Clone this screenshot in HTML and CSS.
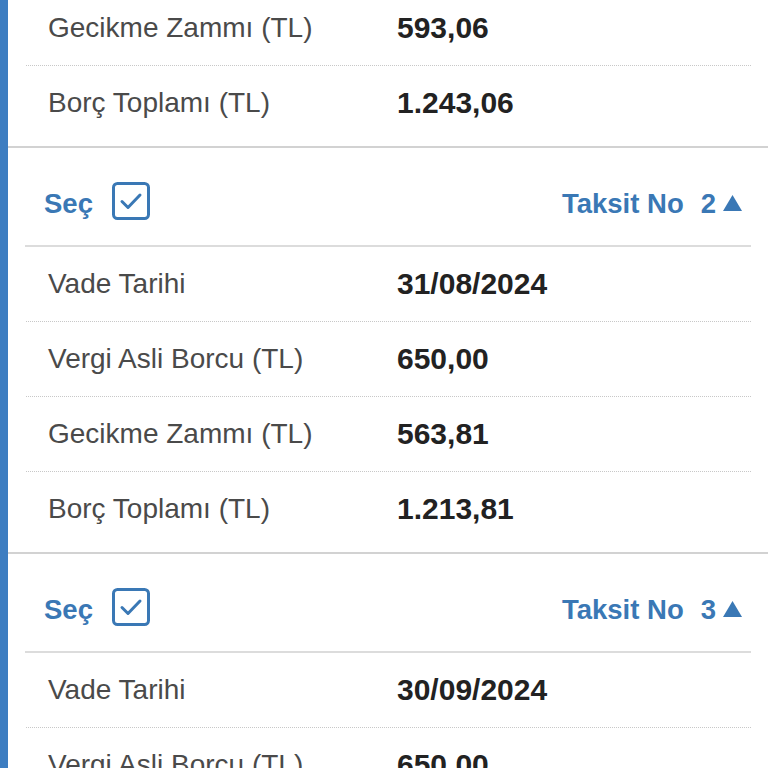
FILE: index.html
```html
<!DOCTYPE html>
<html lang="tr">
<head>
<meta charset="utf-8">
<link rel="stylesheet" href="styles.css">
</head>
<body>
<div class="page">
  <div class="bar"></div>
  <div class="content">
    <section class="sec sec-first">
      <div class="rows">
        <div class="row"><span class="lbl">Gecikme Zammı (TL)</span><span class="val">593,06</span></div>
        <div class="row"><span class="lbl">Borç Toplamı (TL)</span><span class="val">1.243,06</span></div>
      </div>
    </section>
    <section class="sec">
      <div class="head">
        <div class="sel"><span class="htext">Seç</span>
          <svg class="chk" width="38" height="38" viewBox="0 0 38 38"><rect x="1.5" y="1.5" width="35" height="35" rx="4" fill="none" stroke="#3a78b5" stroke-width="3"/><polyline points="10,19.5 16,25.5 28,13" fill="none" stroke="#3a78b5" stroke-width="3" stroke-linecap="round" stroke-linejoin="round"/></svg>
        </div>
        <div class="taksit"><span class="htext">Taksit No</span><span class="htext no">2</span>
          <svg class="tri" width="19" height="16" viewBox="0 0 19 16"><polygon points="9.5,0 19,16 0,16" fill="#3a78b5"/></svg>
        </div>
      </div>
      <div class="rows">
        <div class="row"><span class="lbl">Vade Tarihi</span><span class="val">31/08/2024</span></div>
        <div class="row"><span class="lbl">Vergi Asli Borcu (TL)</span><span class="val">650,00</span></div>
        <div class="row"><span class="lbl">Gecikme Zammı (TL)</span><span class="val">563,81</span></div>
        <div class="row"><span class="lbl">Borç Toplamı (TL)</span><span class="val">1.213,81</span></div>
      </div>
    </section>
    <section class="sec">
      <div class="head">
        <div class="sel"><span class="htext">Seç</span>
          <svg class="chk" width="38" height="38" viewBox="0 0 38 38"><rect x="1.5" y="1.5" width="35" height="35" rx="4" fill="none" stroke="#3a78b5" stroke-width="3"/><polyline points="10,19.5 16,25.5 28,13" fill="none" stroke="#3a78b5" stroke-width="3" stroke-linecap="round" stroke-linejoin="round"/></svg>
        </div>
        <div class="taksit"><span class="htext">Taksit No</span><span class="htext no">3</span>
          <svg class="tri" width="19" height="16" viewBox="0 0 19 16"><polygon points="9.5,0 19,16 0,16" fill="#3a78b5"/></svg>
        </div>
      </div>
      <div class="rows">
        <div class="row"><span class="lbl">Vade Tarihi</span><span class="val">30/09/2024</span></div>
        <div class="row"><span class="lbl">Vergi Asli Borcu (TL)</span><span class="val">650,00</span></div>
        <div class="row"><span class="lbl">Gecikme Zammı (TL)</span><span class="val">563,81</span></div>
        <div class="row"><span class="lbl">Borç Toplamı (TL)</span><span class="val">1.213,81</span></div>
      </div>
    </section>
  </div>
</div>
</body>
</html>
```
FILE: styles.css
```css
html, body {
  margin: 0;
  padding: 0;
  background: #fff;
  height: 768px;
  overflow: hidden;
}
body {
  font-family: "Liberation Sans", Arial, Helvetica, sans-serif;
}
.page {
  display: flex;
  min-height: 768px;
}
.bar {
  width: 8px;
  flex: none;
  background: #3d7dc1;
}
.content {
  flex: 1;
  min-width: 0;
}
.sec {
  border-top: 2px solid #d2d2d2;
  padding-bottom: 6px;
}
.sec-first {
  border-top: none;
  margin-top: -9px;
}
.head {
  margin: 0 17px 0 17px;
  height: 89px;
  border-bottom: 2px solid #dcdcdc;
  display: flex;
  align-items: center;
  justify-content: space-between;
  padding: 8px 9px 0 19px;
  color: #3a78b5;
  font-weight: bold;
  font-size: 27.5px;
}
.htext {
  margin-top: 6px;
}
.sel {
  display: flex;
  align-items: center;
}
.chk {
  margin-left: 19px;
  display: block;
}
.taksit {
  display: flex;
  align-items: center;
}
.no {
  margin-left: 17px;
}
.tri {
  margin-left: 7px;
  margin-top: 4px;
  display: block;
}
.rows {
  margin: 0 17px 0 18px;
}
.row {
  height: 74px;
  display: flex;
  align-items: center;
  border-bottom: 1px dotted #c8c8c8;
}
.row:last-child {
  border-bottom: none;
}
.lbl {
  width: 349px;
  padding-left: 22px;
  flex: none;
  font-size: 28px;
  color: #4a4a4a;
}
.val {
  font-size: 30px;
  font-weight: bold;
  color: #222;
}
```
